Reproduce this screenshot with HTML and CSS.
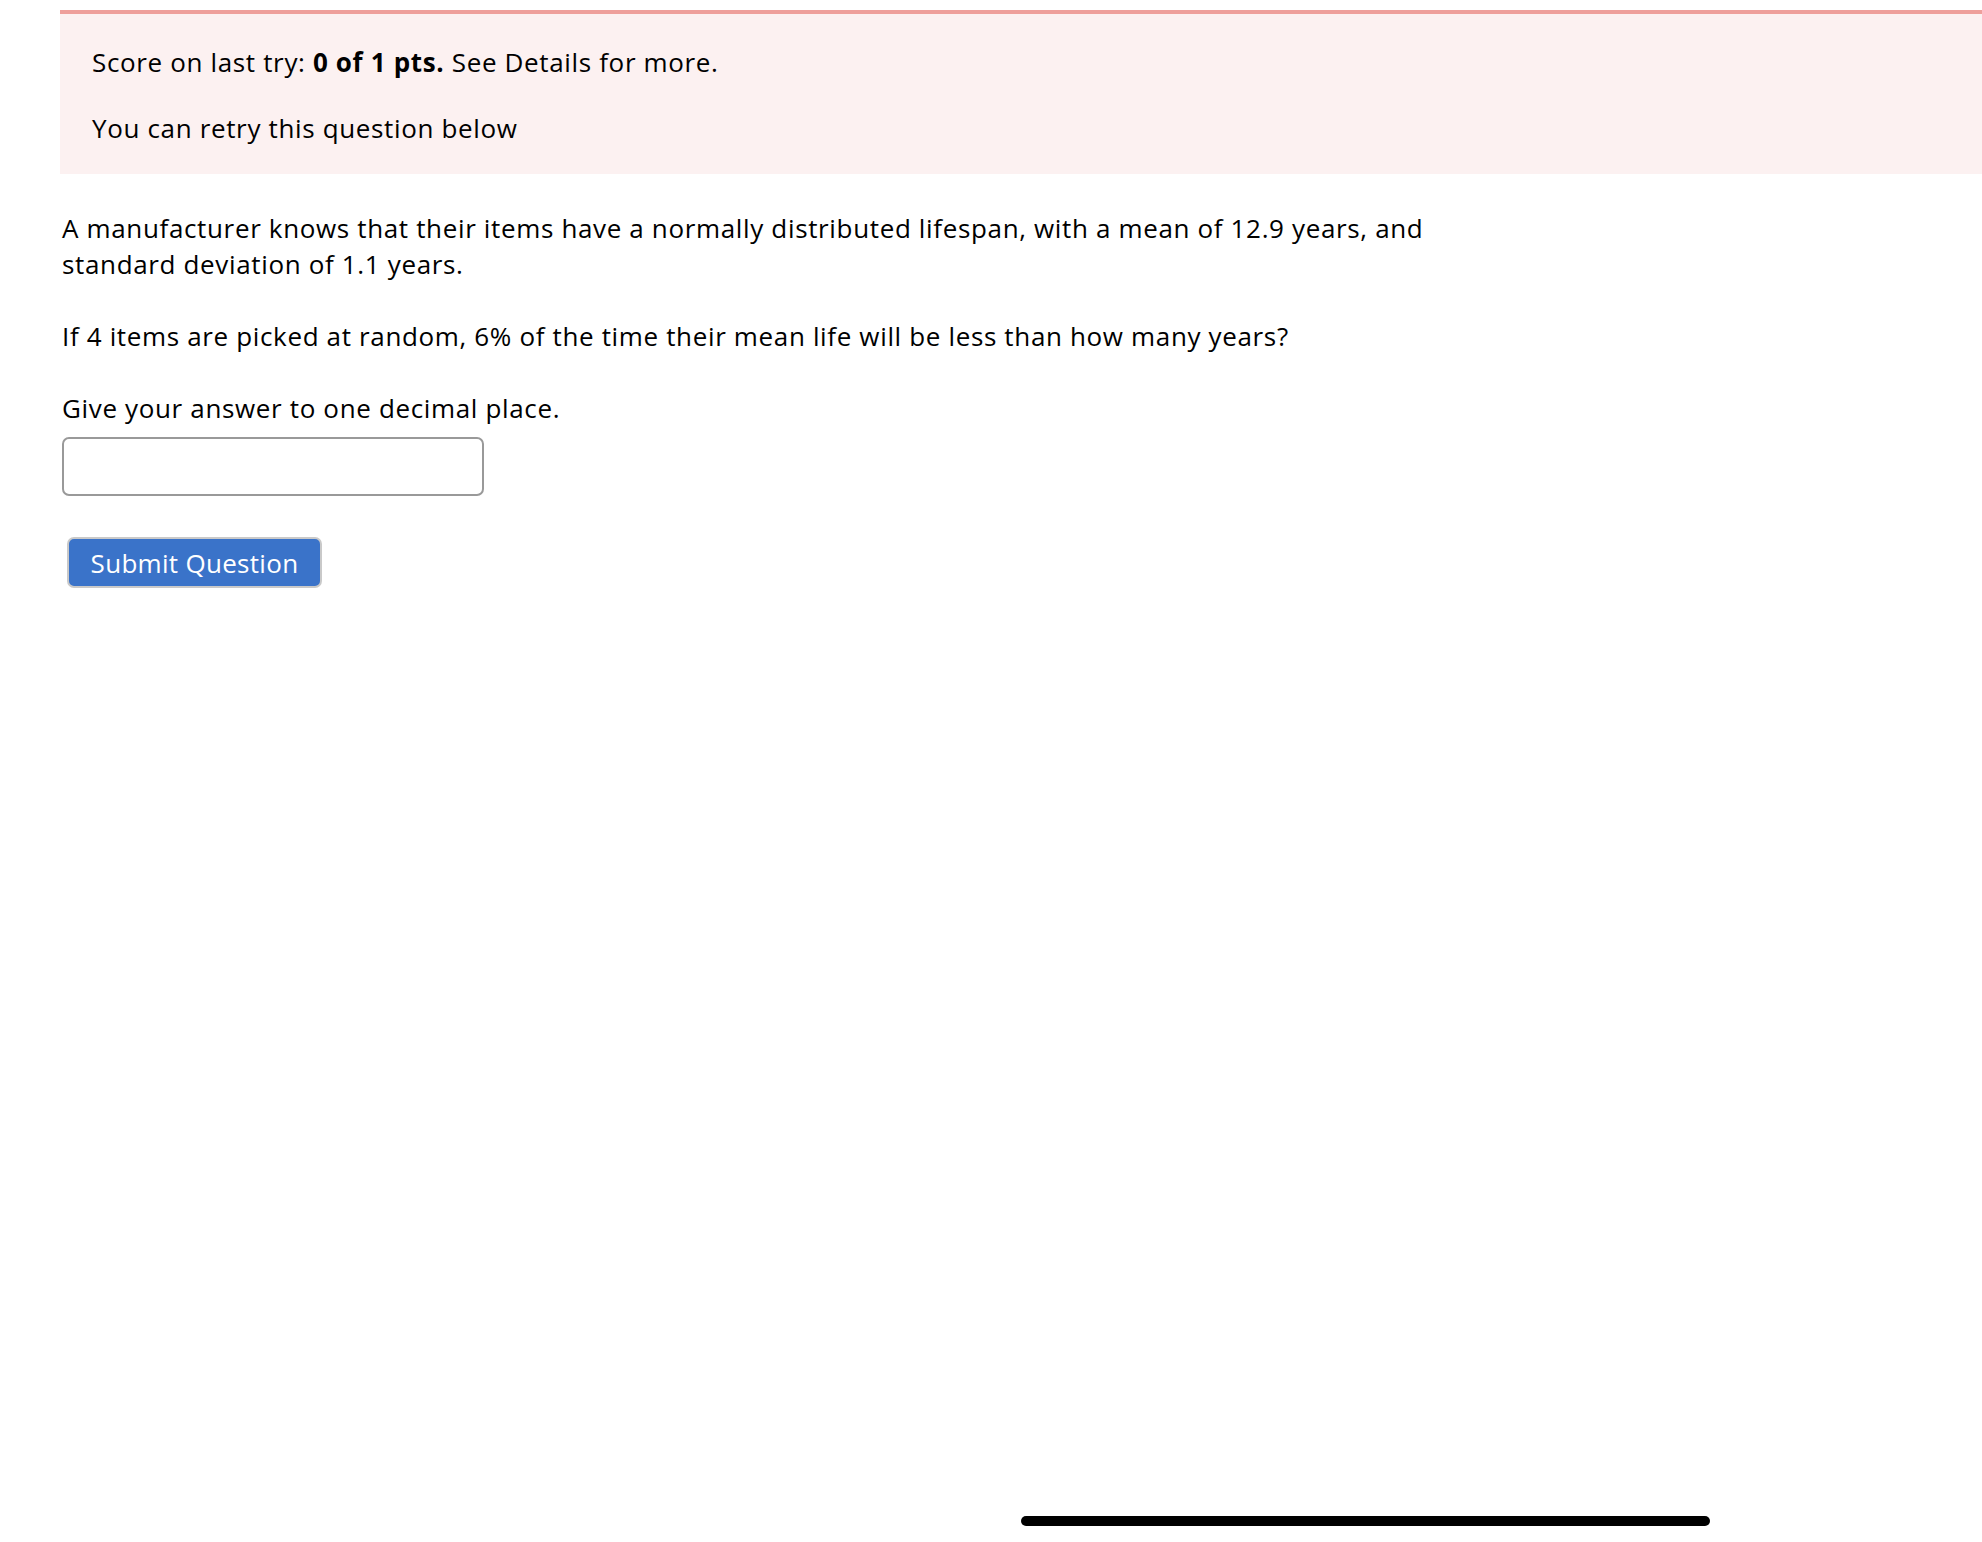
FILE: index.html
```html
<!DOCTYPE html>
<html lang="en">
<head>
<meta charset="utf-8">
<title>Question</title>
<link rel="stylesheet" href="styles.css">
</head>
<body>
<div class="page">
  <div class="alert">
    <p>Score on last try: <strong>0 of 1 pts.</strong> See Details for more.</p>
    <p>You can retry this question below</p>
  </div>
  <div class="question">
    <p>A manufacturer knows that their items have a normally distributed lifespan, with a mean of 12.9 years, and<br>standard deviation of 1.1 years.</p>
    <p>If 4 items are picked at random, 6% of the time their mean life will be less than how many years?</p>
    <p class="last">Give your answer to one decimal place.</p>
    <input class="answer" type="text" aria-label="answer">
    <div class="actions">
      <button class="submit" type="button">Submit Question</button>
    </div>
  </div>
</div>
<div class="home-indicator"></div>
</body>
</html>
```
FILE: styles.css
```css
html, body {
  margin: 0;
  padding: 0;
  background: #ffffff;
}
body {
  font-family: "Open Sans", Lato, "DejaVu Sans", sans-serif;
  font-size: 26px;
  letter-spacing: 0.65px;
  color: #000;
  overflow: hidden;
  height: 1542px;
}
.page {
  padding: 10px 0 0 60px;
}
.alert {
  border-top: 4px solid #ee9f9b;
  background: #fcf1f1;
  padding: 30px 32px 28px;
}
.alert p {
  margin: 0;
  line-height: 36px;
}
.alert p + p {
  margin-top: 30px;
}
.alert strong {
  font-weight: 700;
}
.question {
  padding-left: 2px;
}
.question p {
  margin: 36px 0 0;
  line-height: 36px;
}
.answer {
  display: block;
  box-sizing: border-box;
  margin-top: 11px;
  width: 422px;
  height: 59px;
  border: 2px solid #999;
  border-radius: 7px;
  background: #fff;
  font: inherit;
  padding: 0 10px;
  outline: none;
}
.actions {
  margin-top: 41px;
  padding-left: 5px;
}
.submit {
  box-sizing: border-box;
  width: 255px;
  height: 51px;
  background: #3a73c9;
  border: 2px solid #c9c9c9;
  border-radius: 7px;
  color: #fff;
  font-family: inherit;
  font-size: 26px;
  letter-spacing: 0.3px;
  padding: 0;
  cursor: pointer;
}
.home-indicator {
  position: fixed;
  left: 1021px;
  top: 1516px;
  width: 689px;
  height: 10px;
  border-radius: 5px;
  background: #000;
}
```
